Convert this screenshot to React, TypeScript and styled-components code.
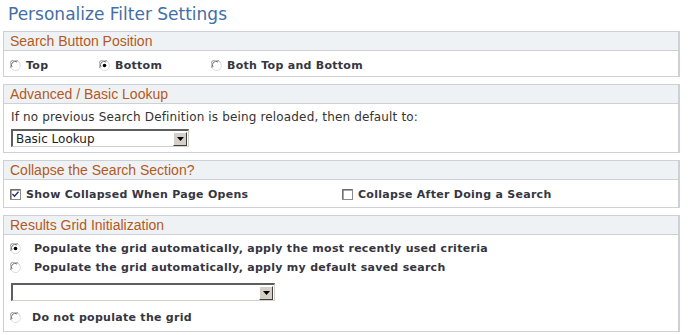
import React from "react";
import styled, { createGlobalStyle } from "styled-components";

const Global = createGlobalStyle`
  html, body { margin: 0; padding: 0; background: #ffffff; }
  body { font-family: "DejaVu Sans", Verdana, sans-serif; }
`;

const Page = styled.div`
  width: 690px;
  height: 335px;
  box-sizing: border-box;
  padding: 0 0 0 3px;
  display: flex;
  flex-direction: column;
`;

const Title = styled.h1`
  margin: 0;
  height: 31px;
  padding: 3px 0 0 5px;
  box-sizing: border-box;
  font-family: "DejaVu Sans", Verdana, sans-serif;
  font-weight: normal;
  font-size: 17px;
  line-height: 22px;
  color: #436ea6;
`;

const Sections = styled.div`
  display: flex;
  flex-direction: column;
  gap: 7px;
`;

const Section = styled.section`
  width: 677px;
  box-sizing: border-box;
  border: 1px solid #cdd0d4;
  border-right: 2px solid #cdd0d4;
  background: #fff;
`;

const Header = styled.div`
  height: 19px;
  box-sizing: border-box;
  background: #eff2f4;
  border-bottom: 1px solid #cdd0d4;
  padding-left: 6px;
  font-family: "Liberation Sans", Arial, sans-serif;
  font-size: 14px;
  line-height: 19px;
  color: #b3591e;
`;

const Body = styled.div<{ $h: number; $pt?: number }>`
  height: ${(p) => p.$h}px;
  box-sizing: border-box;
  padding: ${(p) => p.$pt ?? 0}px 0 0 6px;
  font-size: 11px;
  color: #333;
`;

const OptionRow = styled.div<{ $cols: string; $h?: number }>`
  display: grid;
  grid-template-columns: ${(p) => p.$cols};
  height: ${(p) => p.$h ?? 25}px;
  align-items: center;
`;

const Option = styled.label<{ $gap?: number }>`
  display: flex;
  align-items: center;
  gap: ${(p) => p.$gap ?? 6}px;
  font-family: "DejaVu Sans", Verdana, sans-serif;
  font-weight: bold;
  font-size: 11px;
  letter-spacing: 0.28px;
  color: #36363f;
  white-space: nowrap;
`;

const Plain = styled.div`
  font-family: "DejaVu Sans", Verdana, sans-serif;
  font-size: 12px;
  letter-spacing: 0.15px;
  line-height: 14px;
  color: #333;
  padding: 6px 0 0 1px;
  height: 25px;
  box-sizing: border-box;
`;

const SelectBox = styled.div<{ $w: number }>`
  width: ${(p) => p.$w}px;
  height: 18px;
  box-sizing: border-box;
  margin-left: 1px;
  border-top: 2px solid #5e5e5e;
  border-left: 2px solid #5e5e5e;
  border-right: 1px solid #d4d0c8;
  border-bottom: 1px solid #d4d0c8;
  background: #fff;
  display: flex;
  align-items: center;
  justify-content: space-between;
  font-family: "DejaVu Sans", Verdana, sans-serif;
  font-size: 12px;
  color: #222;
  padding-left: 3px;
`;

const DropButton = styled.div`
  width: 14px;
  height: 14px;
  margin-right: 1px;
  box-sizing: border-box;
  background: #d4d0c8;
  border-top: 1px solid #fff;
  border-left: 1px solid #fff;
  border-right: 1px solid #404040;
  border-bottom: 1px solid #404040;
  display: flex;
  align-items: center;
  justify-content: center;
`;

const GridRow = styled.div<{ $h: number; $top?: boolean; $pt?: number }>`
  height: ${(p) => p.$h}px;
  box-sizing: border-box;
  padding-top: ${(p) => p.$pt ?? 0}px;
  display: flex;
  align-items: ${(p) => (p.$top ? "flex-start" : "center")};
`;

const Radio = ({ checked }: { checked?: boolean }) => (
  <svg width="11" height="11" viewBox="0 0 11 11">
    <circle cx="5.5" cy="5.5" r="5" fill="#fff" />
    <path d="M1.2 8 A4.7 4.7 0 0 1 8 1.2" stroke="#808080" strokeWidth="1" fill="none" />
    <path d="M8 1.2 A4.7 4.7 0 0 1 9.8 3.4" stroke="#c8c8c8" strokeWidth="1" fill="none" />
    <path d="M9.8 3.4 A4.7 4.7 0 0 1 1.2 8" stroke="#dcdcdc" strokeWidth="1" fill="none" />
    <path d="M2 7 A3.6 3.6 0 0 1 7 2" stroke="#404040" strokeWidth="0.8" fill="none" />
    {checked && <circle cx="5.5" cy="5.5" r="1.8" fill="#000" />}
  </svg>
);

const Check = ({ checked }: { checked?: boolean }) => (
  <svg width="11" height="11" viewBox="0 0 11 11">
    <rect x="0.5" y="0.5" width="10" height="10" fill="#fff" stroke="#8a8a8a" />
    <path d="M1 10 V1 H10" stroke="#505050" strokeWidth="1" fill="none" />
    {checked && (
      <path d="M2.5 5 L4.5 7.2 L8.5 2.8" stroke="#1b2a6b" strokeWidth="1.3" fill="none" />
    )}
  </svg>
);

const Arrow = () => (
  <svg width="7" height="4" viewBox="0 0 7 4">
    <path d="M0 0 H7 L3.5 4 Z" fill="#000" />
  </svg>
);

const Select = ({ w, value }: { w: number; value?: string }) => (
  <SelectBox $w={w}>
    <span>{value ?? ""}</span>
    <DropButton>
      <Arrow />
    </DropButton>
  </SelectBox>
);

export default function App() {
  return (
    <Page>
      <Global />
      <Title>Personalize Filter Settings</Title>
      <Sections>
        <Section>
          <Header>Search Button Position</Header>
          <Body $h={25}>
            <OptionRow $cols="89px 112px auto" $h={29}>
              <Option $gap={5}>
                <Radio />
                Top
              </Option>
              <Option $gap={5}>
                <Radio checked />
                Bottom
              </Option>
              <Option $gap={5}>
                <Radio />
                Both Top and Bottom
              </Option>
            </OptionRow>
          </Body>
        </Section>

        <Section>
          <Header>Advanced / Basic Lookup</Header>
          <Body $h={48}>
            <Plain>If no previous Search Definition is being reloaded, then default to:</Plain>
            <Select w={178} value="Basic Lookup" />
          </Body>
        </Section>

        <Section>
          <Header>Collapse the Search Section?</Header>
          <Body $h={27}>
            <OptionRow $cols="332px auto" $h={29}>
              <Option $gap={5}>
                <Check checked />
                Show Collapsed When Page Opens
              </Option>
              <Option $gap={5}>
                <Check />
                Collapse After Doing a Search
              </Option>
            </OptionRow>
          </Body>
        </Section>

        <Section>
          <Header>Results Grid Initialization</Header>
          <Body $h={96} $pt={4}>
            <GridRow $h={19}>
              <Option $gap={13}>
                <Radio checked />
                Populate the grid automatically, apply the most recently used criteria
              </Option>
            </GridRow>
            <GridRow $h={19}>
              <Option $gap={13}>
                <Radio />
                Populate the grid automatically, apply my default saved search
              </Option>
            </GridRow>
            <GridRow $h={31} $top $pt={6}>
              <Select w={264} />
            </GridRow>
            <GridRow $h={19}>
              <Option $gap={11}>
                <Radio />
                Do not populate the grid
              </Option>
            </GridRow>
          </Body>
        </Section>
      </Sections>
    </Page>
  );
}
